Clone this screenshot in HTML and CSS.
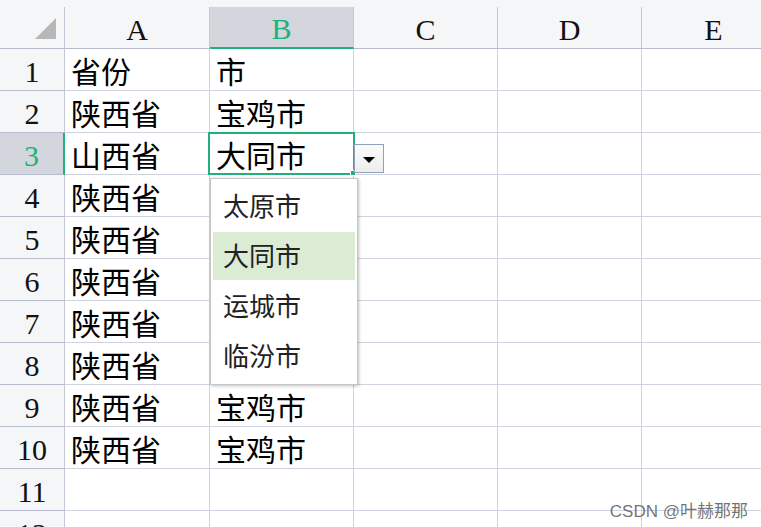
FILE: index.html
```html
<!DOCTYPE html>
<html lang="zh-CN">
<head>
<meta charset="utf-8">
<link rel="stylesheet" href="styles.css">
</head>
<body>
<div class="sheet">
  <div class="topband"></div>
  <div class="grid">
    <div class="hd corner"><svg class="tri" width="21" height="21" viewBox="0 0 21 21"><polygon points="0,21 21,21 21,0" fill="#b7b7b7"/></svg></div>
    <div class="hd col">A</div>
    <div class="hd col sel-col">B</div>
    <div class="hd col">C</div>
    <div class="hd col">D</div>
    <div class="hd col">E</div>

    <div class="hd row">1</div><div class="c">省份</div><div class="c">市</div><div class="c"></div><div class="c"></div><div class="c"></div>
    <div class="hd row">2</div><div class="c">陕西省</div><div class="c">宝鸡市</div><div class="c"></div><div class="c"></div><div class="c"></div>
    <div class="hd row sel-row">3</div><div class="c">山西省</div>
    <div class="c active">大同市
      <div class="selbox"><span class="handle"></span></div>
      <div class="ddbtn"><span class="arrow"></span></div>
      <ul class="ddlist">
        <li>太原市</li>
        <li class="hl">大同市</li>
        <li>运城市</li>
        <li>临汾市</li>
      </ul>
    </div>
    <div class="c"></div><div class="c"></div><div class="c"></div>
    <div class="hd row">4</div><div class="c">陕西省</div><div class="c"></div><div class="c"></div><div class="c"></div><div class="c"></div>
    <div class="hd row">5</div><div class="c">陕西省</div><div class="c"></div><div class="c"></div><div class="c"></div><div class="c"></div>
    <div class="hd row">6</div><div class="c">陕西省</div><div class="c"></div><div class="c"></div><div class="c"></div><div class="c"></div>
    <div class="hd row">7</div><div class="c">陕西省</div><div class="c"></div><div class="c"></div><div class="c"></div><div class="c"></div>
    <div class="hd row">8</div><div class="c">陕西省</div><div class="c"></div><div class="c"></div><div class="c"></div><div class="c"></div>
    <div class="hd row">9</div><div class="c">陕西省</div><div class="c">宝鸡市</div><div class="c"></div><div class="c"></div><div class="c"></div>
    <div class="hd row">10</div><div class="c">陕西省</div><div class="c">宝鸡市</div><div class="c"></div><div class="c"></div><div class="c"></div>
    <div class="hd row">11</div><div class="c"></div><div class="c"></div><div class="c"></div><div class="c"></div><div class="c"></div>
    <div class="hd row">12</div><div class="c"></div><div class="c"></div><div class="c"></div><div class="c"></div><div class="c"></div>
  </div>
  <div class="watermark">CSDN @叶赫那那</div>
</div>
</body>
</html>
```

FILE: styles.css
```css
html, body {
  margin: 0;
  padding: 0;
  background: #ffffff;
  overflow: hidden;
}
.sheet {
  position: relative;
  width: 761px;
  height: 527px;
  overflow: hidden;
}
.topband {
  height: 7px;
  background: #f5f6f8;
}
.grid {
  display: grid;
  grid-template-columns: 65px 145px repeat(4, 144px);
  grid-auto-rows: 42px;
  width: 786px;
}
.hd {
  background: #f5f6f8;
  box-sizing: border-box;
  border-right: 1px solid #c3c8d6;
  border-bottom: 1px solid #b6bccd;
  font-family: "Liberation Serif", "Times New Roman", serif;
  font-size: 30px;
  color: #111;
  display: flex;
  align-items: center;
  justify-content: center;
  padding-top: 4px;
}
.corner {
  position: relative;
  padding: 0;
}
.tri {
  position: absolute;
  left: 35px;
  top: 11px;
}
.col.sel-col {
  background: #d3d6dd;
  color: #21b27b;
  border-bottom: 2px solid #21b27b;
}
.row.sel-row {
  background: #d3d6dd;
  color: #21b27b;
  border-right: 2px solid #21b27b;
}
.c {
  box-sizing: border-box;
  border-right: 1px solid #cdd2de;
  border-bottom: 1px solid #cdd2de;
  font-family: "Noto Sans CJK SC", "Noto Sans", sans-serif;
  font-size: 30px;
  line-height: 1;
  color: #000;
  display: flex;
  align-items: center;
  padding-left: 6px;
  padding-top: 1px;
  white-space: nowrap;
}
.active {
  position: relative;
}
.selbox {
  position: absolute;
  left: -2px;
  top: -1px;
  width: 147px;
  height: 43px;
  box-sizing: border-box;
  border: 2px solid #21b27b;
}
.handle {
  position: absolute;
  right: -3px;
  bottom: -3px;
  width: 4px;
  height: 4px;
  background: #21b27b;
  border: 1px solid #fff;
}
.ddbtn {
  position: absolute;
  left: 144px;
  top: 11px;
  width: 30px;
  height: 29px;
  box-sizing: border-box;
  border: 1px solid #8fa2ba;
  background: linear-gradient(#fbfbfb, #eeeeee);
  display: flex;
  align-items: center;
  justify-content: center;
}
.arrow {
  width: 0;
  height: 0;
  border-left: 6px solid transparent;
  border-right: 6px solid transparent;
  border-top: 6px solid #000;
  margin-top: 2px;
}
.ddlist {
  position: absolute;
  left: 0px;
  top: 45px;
  width: 148px;
  margin: 0;
  padding: 2px 2px 3px 2px;
  box-sizing: border-box;
  list-style: none;
  background: #fff;
  border: 1px solid #c6c6c6;
  box-shadow: 1px 1px 3px rgba(0,0,0,0.25);
  z-index: 5;
}
.ddlist li {
  height: 50px;
  display: flex;
  align-items: center;
  padding-left: 10px;
  padding-bottom: 2px;
  box-sizing: border-box;
  font-family: "Noto Sans CJK SC", "Noto Sans", sans-serif;
  font-size: 26px;
  color: #222;
}
.ddlist li.hl {
  background: #dcebd4;
  height: 48px;
  margin: 1px 0;
}
.watermark {
  position: absolute;
  right: 13px;
  top: 497px;
  font-family: "Liberation Sans", "Noto Sans CJK SC", sans-serif;
  font-size: 17px;
  color: rgba(90, 90, 90, 0.85);
}
```
